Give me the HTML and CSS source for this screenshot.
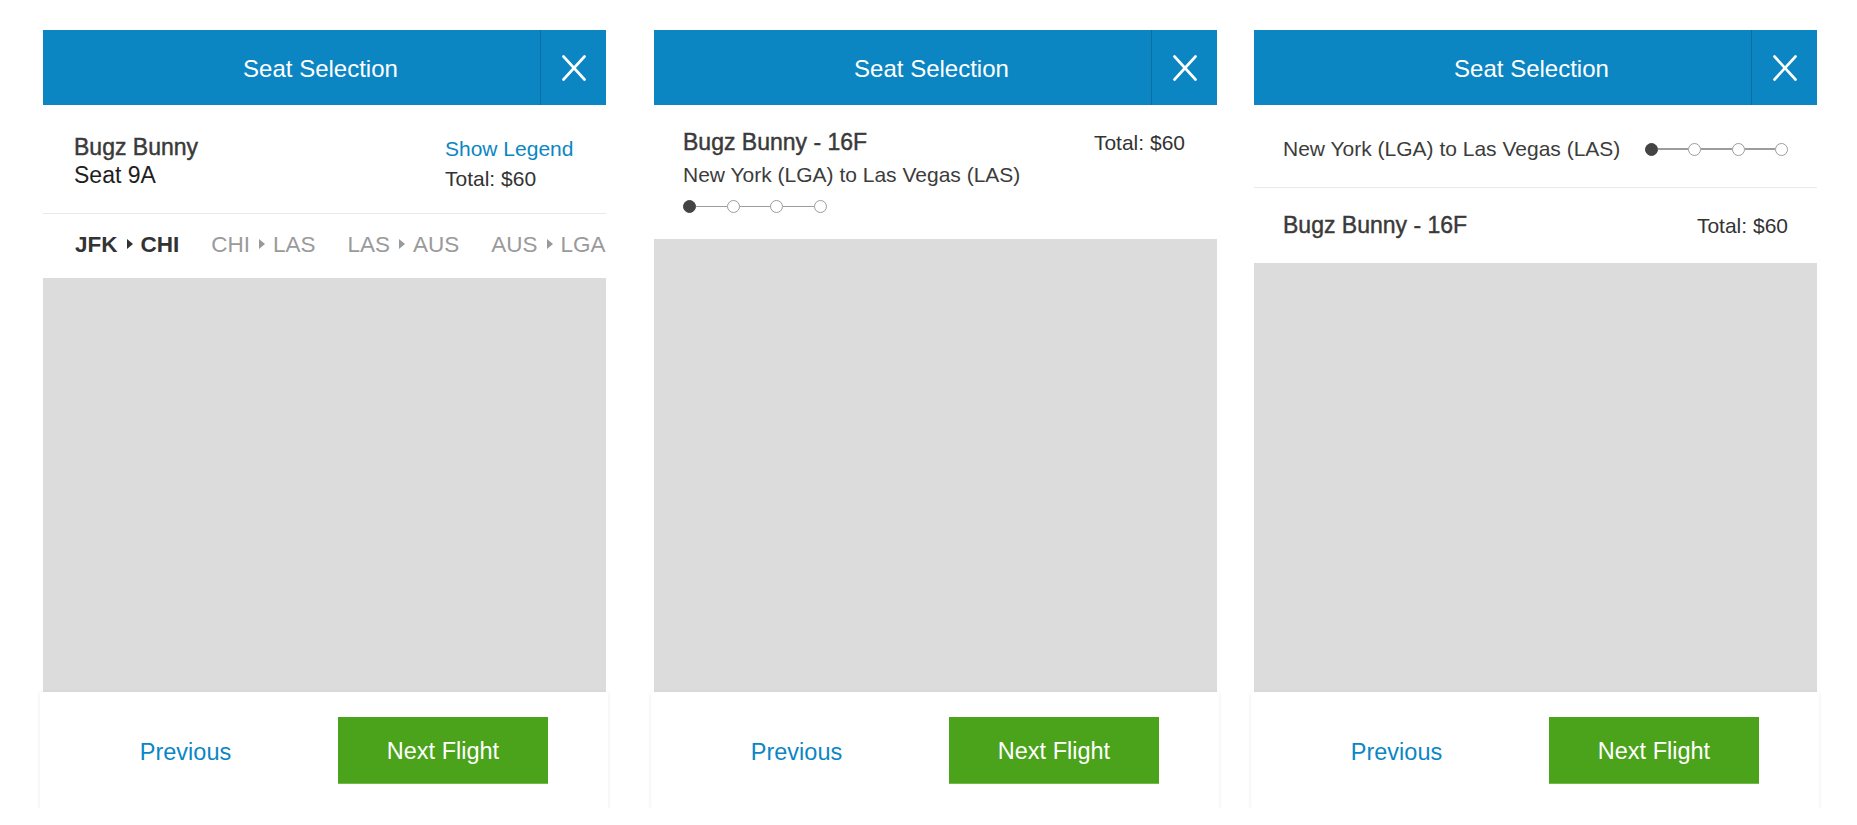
FILE: index.html
```html
<!DOCTYPE html>
<html>
<head>
<meta charset="utf-8">
<title>Seat Selection</title>
<link rel="stylesheet" href="styles.css">
</head>
<body>
<div class="page">

  <section class="panel p1">
    <header class="bar">
      <div class="bar-title">Seat Selection</div>
      <button class="bar-close" aria-label="Close">
        <svg width="24" height="26" viewBox="0 0 24 26"><path d="M1.5 1.5 L22.5 24.5 M22.5 1.5 L1.5 24.5" stroke="#fff" stroke-width="2.6" stroke-linecap="round" fill="none"/></svg>
      </button>
    </header>
    <div class="info1">
      <div class="who">
        <div class="name">Bugz Bunny</div>
        <div class="seat">Seat 9A</div>
      </div>
      <div class="side">
        <a class="legend">Show Legend</a>
        <div class="total">Total: $60</div>
      </div>
    </div>
    <nav class="tabs">
      <span class="tab active">JFK<i class="caret"></i>CHI</span>
      <span class="tab">CHI<i class="caret"></i>LAS</span>
      <span class="tab">LAS<i class="caret"></i>AUS</span>
      <span class="tab">AUS<i class="caret"></i>LGA</span>
    </nav>
    <div class="map"></div>
    <footer class="foot">
      <div class="prev"><a>Previous</a></div>
      <button class="next">Next Flight</button>
    </footer>
  </section>

  <section class="panel p2">
    <header class="bar">
      <div class="bar-title">Seat Selection</div>
      <button class="bar-close" aria-label="Close">
        <svg width="24" height="26" viewBox="0 0 24 26"><path d="M1.5 1.5 L22.5 24.5 M22.5 1.5 L1.5 24.5" stroke="#fff" stroke-width="2.6" stroke-linecap="round" fill="none"/></svg>
      </button>
    </header>
    <div class="info2">
      <div class="row-top">
        <div class="name">Bugz Bunny - 16F</div>
        <div class="total">Total: $60</div>
      </div>
      <div class="route">New York (LGA) to Las Vegas (LAS)</div>
      <div class="steps">
        <span class="dot on"></span><span class="line"></span>
        <span class="dot"></span><span class="line"></span>
        <span class="dot"></span><span class="line"></span>
        <span class="dot"></span>
      </div>
    </div>
    <div class="map"></div>
    <footer class="foot">
      <div class="prev"><a>Previous</a></div>
      <button class="next">Next Flight</button>
    </footer>
  </section>

  <section class="panel p3">
    <header class="bar">
      <div class="bar-title">Seat Selection</div>
      <button class="bar-close" aria-label="Close">
        <svg width="24" height="26" viewBox="0 0 24 26"><path d="M1.5 1.5 L22.5 24.5 M22.5 1.5 L1.5 24.5" stroke="#fff" stroke-width="2.6" stroke-linecap="round" fill="none"/></svg>
      </button>
    </header>
    <div class="route-row">
      <div class="route">New York (LGA) to Las Vegas (LAS)</div>
      <div class="steps">
        <span class="dot on"></span><span class="line"></span>
        <span class="dot"></span><span class="line"></span>
        <span class="dot"></span><span class="line"></span>
        <span class="dot"></span>
      </div>
    </div>
    <div class="name-row">
      <div class="name">Bugz Bunny - 16F</div>
      <div class="total">Total: $60</div>
    </div>
    <div class="map"></div>
    <footer class="foot">
      <div class="prev"><a>Previous</a></div>
      <button class="next">Next Flight</button>
    </footer>
  </section>

</div>
</body>
</html>
```

FILE: styles.css
```css
* { box-sizing: border-box; }

html, body {
  margin: 0;
  padding: 0;
  background: #ffffff;
}

body {
  font-family: "Liberation Sans", Arial, Helvetica, sans-serif;
  color: #333;
}

.page {
  display: flex;
  align-items: flex-start;
  padding-top: 30px;
}

.panel {
  width: 563px;
  height: 778px;
  display: flex;
  flex-direction: column;
  background: #fff;
}

.p1 { margin-left: 43px; }
.p2 { margin-left: 48px; }
.p3 { margin-left: 37px; }

/* header bar */
.bar {
  height: 75px;
  background: #0c86c2;
  display: flex;
  align-items: stretch;
  flex: 0 0 auto;
}

.bar-title {
  flex: 1;
  display: flex;
  align-items: center;
  justify-content: center;
  padding-left: 58px;
  padding-top: 3px;
  color: #fff;
  font-size: 24px;
}

.bar-close {
  width: 66px;
  border: 0;
  border-left: 1px solid #0a6da3;
  background: transparent;
  padding: 0;
  display: flex;
  align-items: center;
  justify-content: center;
}

/* medium weight simulation */
.name {
  font-size: 23px;
  line-height: 28px;
  color: #3a3a3a;
  -webkit-text-stroke: 0.45px #3a3a3a;
}

.total {
  font-size: 21px;
  line-height: 28px;
  color: #333;
}

/* panel 1 */
.info1 {
  display: flex;
  justify-content: space-between;
  align-items: flex-start;
  padding: 28px 32px 0 31px;
  height: 109px;
  border-bottom: 1px solid #e9e9e9;
  flex: 0 0 auto;
}

.info1 .seat {
  font-size: 23px;
  line-height: 28px;
  color: #1e1e1e;
}

.side {
  margin-top: 1px;
  width: 129px;
}

.legend {
  display: block;
  font-size: 21px;
  line-height: 30px;
  color: #0b86c4;
}

.side .total {
  line-height: 30px;
}

.tabs {
  display: flex;
  white-space: nowrap;
  overflow: hidden;
  padding: 19px 0 21px 32px;
  font-size: 22.5px;
  line-height: 24px;
  flex: 0 0 auto;
}

.tab {
  color: #9a9a9a;
  margin-right: 32px;
  flex: 0 0 auto;
}

.tab.active {
  color: #333;
  font-weight: 700;
}

.caret {
  display: inline-block;
  width: 0;
  height: 0;
  border-left: 6px solid currentColor;
  border-top: 5px solid transparent;
  border-bottom: 5px solid transparent;
  margin: 0 8px 0 9px;
  vertical-align: 3px;
}

/* panel 2 */
.info2 {
  padding: 23px 32px 26px 29px;
}

.row-top {
  display: flex;
  justify-content: space-between;
  align-items: baseline;
}

.route {
  font-size: 21px;
  line-height: 28px;
  color: #3c3c3c;
}

.info2 .route {
  margin-top: 4px;
}

.steps {
  display: flex;
  align-items: center;
  height: 13px;
}

.info2 .steps {
  margin-top: 11px;
}

.dot {
  width: 13px;
  height: 13px;
  border-radius: 50%;
  border: 1.5px solid #9c9c9c;
  background: #fff;
  flex: 0 0 auto;
}

.dot.on {
  background: #444;
  border-color: #444;
}

.line {
  width: 30.5px;
  height: 1.5px;
  background: #9c9c9c;
  flex: 0 0 auto;
}

/* panel 3 */
.route-row {
  display: flex;
  justify-content: space-between;
  align-items: center;
  padding: 30px 29px 24px 29px;
  border-bottom: 1px solid #e9e9e9;
}

.name-row {
  display: flex;
  justify-content: space-between;
  align-items: baseline;
  padding: 23px 29px 23px 29px;
}

/* seat map placeholder */
.map {
  flex: 1;
  background: #dcdcdc;
}

/* footer */
.foot {
  flex: 0 0 116px;
  margin: 0 -2px 0 -3px;
  padding: 0 2px 0 3px;
  display: flex;
  align-items: center;
  background: #fff;
  box-shadow: 0 1px 4px rgba(0, 0, 0, 0.09);
  position: relative;
}

.prev {
  width: 285px;
  text-align: center;
  padding-top: 5px;
}

.prev a {
  font-size: 23.5px;
  color: #0b86c4;
}

.next {
  margin-left: 10px;
  width: 210px;
  height: 67px;
  border: 0;
  border-bottom: 1px solid #72bb4b;
  background: #4aa31a;
  color: #fff;
  font-family: inherit;
  font-size: 23.5px;
  padding: 3px 0 0 0;
}
```
